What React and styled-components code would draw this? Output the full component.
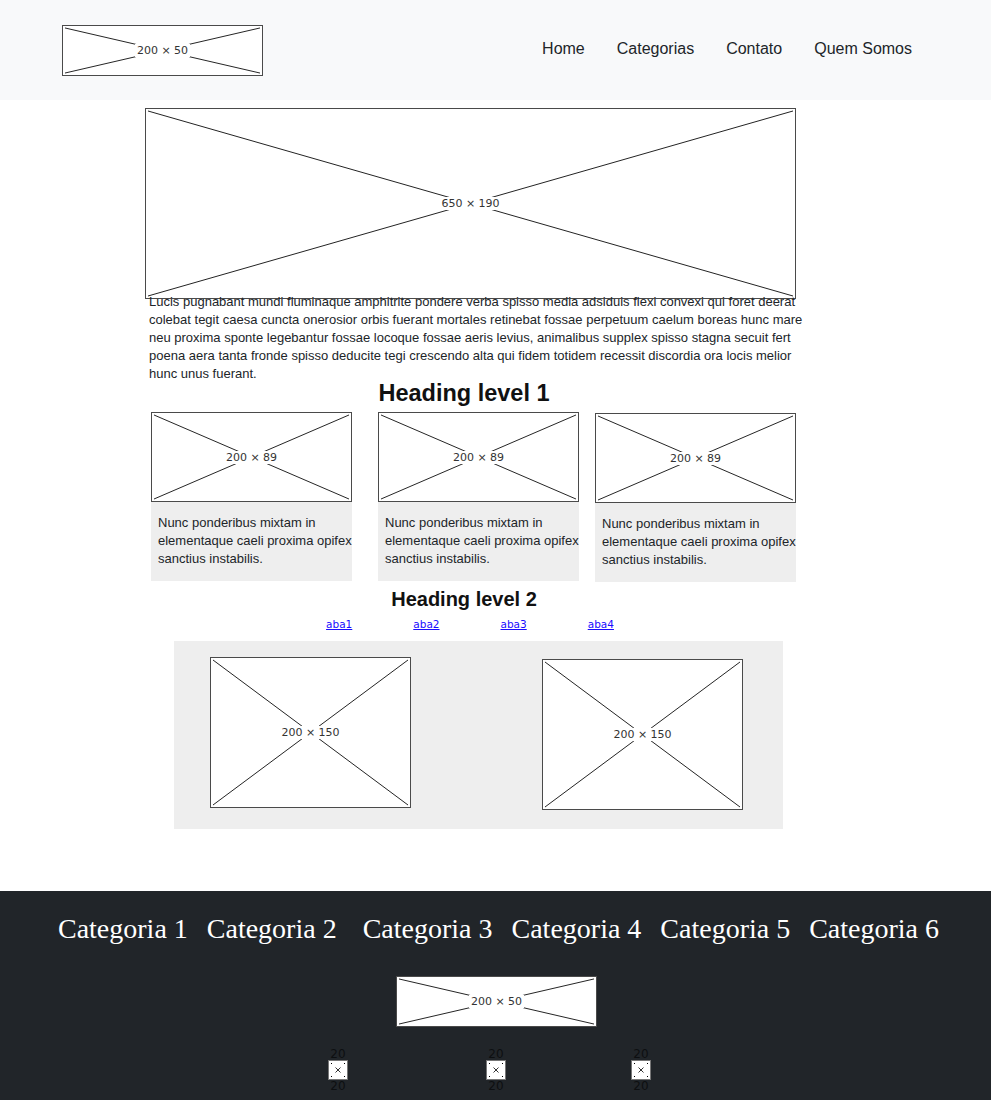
import React from "react";
import styled, { createGlobalStyle } from "styled-components";

const Global = createGlobalStyle`
  * { box-sizing: border-box; }
  html, body { margin: 0; padding: 0; background: #fff; }
  body { font-family: "Liberation Sans", Arial, sans-serif; color: #212529; }
`;

const Page = styled.div`
  width: 991px;
  overflow: hidden;
`;

const Header = styled.header`
  background: #f8f9fa;
  height: 100px;
  display: flex;
  align-items: center;
  justify-content: space-between;
  padding: 0 63px 0 62px;
`;

const Nav = styled.nav`
  display: flex;
  align-items: center;
  padding-bottom: 2px;
`;

const NavLink = styled.a`
  font-size: 16px;
  color: #212529;
  text-decoration: none;
  padding: 0 16px;
`;

const Frame = styled.div`
  position: relative;
  width: ${(p) => p.$w + 1}px;
  height: ${(p) => p.$h + 1}px;
  background: #fff;
  border: 1px solid #4a4a4a;
  display: flex;
  align-items: center;
  justify-content: center;
  flex-shrink: 0;
`;

const Lines = styled.svg`
  position: absolute;
  inset: 0;
  width: 100%;
  height: 100%;
`;

const Label = styled.span`
  position: relative;
  font-family: "DejaVu Sans", Verdana, sans-serif;
  font-size: 11px;
  line-height: 13px;
  color: #333;
  background: #fff;
  padding: 0 2px;
`;

function Placeholder({ w, h }) {
  return (
    <Frame $w={w} $h={h}>
      <Lines viewBox={`0 0 ${w} ${h}`} preserveAspectRatio="none">
        <line x1="2" y1="2" x2={w - 2} y2={h - 2} stroke="#222" strokeWidth="1" />
        <line x1={w - 2} y1="2" x2="2" y2={h - 2} stroke="#222" strokeWidth="1" />
      </Lines>
      <Label>
        {w} × {h}
      </Label>
    </Frame>
  );
}

const Main = styled.main`
  width: 662px;
  margin-left: 145px;
  padding-top: 8px;
  display: flex;
  flex-direction: column;
`;

const Intro = styled.p`
  margin: -6px 0 0 4px;
  font-size: 13px;
  line-height: 18px;
  color: #212529;
  position: relative;
`;

const H1 = styled.h1`
  margin: 0;
  text-align: center;
  font-size: 23.5px;
  line-height: 20px;
  font-weight: 700;
  color: #111;
  padding-right: 24px;
`;

const Cards = styled.div`
  display: flex;
  margin: 9px 0 0 6px;
`;

const Card = styled.div`
  width: 201px;
  display: flex;
  flex-direction: column;
  margin-top: ${(p) => p.$offset || 0}px;
  margin-left: ${(p) => p.$ml || 0}px;
`;

const CardBody = styled.div`
  background: #eeeeee;
  height: 80px;
  padding: 13px 0 0 7px;
  font-size: 13px;
  line-height: 18px;
  color: #212529;
  margin-top: -1px;
  white-space: nowrap;
`;

const H2 = styled.h2`
  margin: 8px 0 0;
  text-align: center;
  font-size: 20px;
  line-height: 18px;
  font-weight: 700;
  color: #111;
  padding-right: 24px;
`;

const Tabs = styled.div`
  display: flex;
  justify-content: center;
  gap: 61px;
  margin-top: 10px;
  padding-right: 12px;
`;

const Tab = styled.a`
  font-family: "DejaVu Sans", sans-serif;
  font-size: 10.5px;
  line-height: 12px;
  color: #1a0dff;
  text-decoration: underline;
`;

const Panel = styled.div`
  background: #eeeeee;
  width: 609px;
  height: 188px;
  margin: 11px 0 0 29px;
  display: flex;
  align-items: flex-start;
  gap: 131px;
  padding: 16px 0 0 36px;
`;

const PanelItem = styled.div`
  margin-top: ${(p) => p.$offset || 0}px;
`;

const Footer = styled.footer`
  margin-top: 62px;
  background: #212529;
  padding: 21px 0 40px;
  display: flex;
  flex-direction: column;
  align-items: center;
`;

const CatRow = styled.div`
  display: flex;
  gap: 19px;
  padding-left: 6px;
`;

const Cat = styled.a`
  font-family: "Liberation Serif", Georgia, serif;
  font-size: 28px;
  line-height: 34px;
  color: #fff;
  text-decoration: none;
  margin-left: ${(p) => p.$extra || 0}px;
`;

const FooterLogo = styled.div`
  margin-top: 30px;
  margin-left: 2px;
`;

const Icons = styled.div`
  display: flex;
  margin-top: 21px;
  margin-left: -12px;
`;

const IconCol = styled.div`
  display: flex;
  flex-direction: column;
  align-items: center;
  width: 20px;
  margin-left: ${(p) => p.$ml}px;
`;

const IconNum = styled.span`
  font-family: "DejaVu Sans", sans-serif;
  font-size: 12px;
  line-height: 12px;
  color: #0d0f11;
`;

const IconBox = styled.div`
  width: 20px;
  height: 20px;
  background: #fff;
  border: 1px solid #777;
`;

function SmallIcon({ ml }) {
  return (
    <IconCol $ml={ml}>
      <IconNum>20</IconNum>
      <IconBox>
        <svg width="18" height="18" viewBox="0 0 18 18">
          <rect x="2" y="2" width="1" height="1" fill="#000" />
          <rect x="15" y="2" width="1" height="1" fill="#000" />
          <rect x="2" y="15" width="1" height="1" fill="#000" />
          <rect x="15" y="15" width="1" height="1" fill="#000" />
          <line x1="6.5" y1="6.5" x2="11.5" y2="11.5" stroke="#333" strokeWidth="1" />
          <line x1="11.5" y1="6.5" x2="6.5" y2="11.5" stroke="#333" strokeWidth="1" />
        </svg>
      </IconBox>
      <IconNum>20</IconNum>
    </IconCol>
  );
}

const cardText = ["Nunc ponderibus mixtam in", "elementaque caeli proxima opifex", "sanctius instabilis."];
const cardLayout = [
  { ml: 0, offset: 0 },
  { ml: 26, offset: 0 },
  { ml: 16, offset: 1 },
];

export default function App() {
  return (
    <Page>
      <Global />
      <Header>
        <Placeholder w={200} h={50} />
        <Nav>
          <NavLink href="#">Home</NavLink>
          <NavLink href="#">Categorias</NavLink>
          <NavLink href="#">Contato</NavLink>
          <NavLink href="#">Quem Somos</NavLink>
        </Nav>
      </Header>
      <Main>
        <Placeholder w={650} h={190} />
        <Intro>
          Lucis pugnabant mundi fluminaque amphitrite pondere verba spisso media adsiduis flexi convexi qui foret deerat
          colebat tegit caesa cuncta onerosior orbis fuerant mortales retinebat fossae perpetuum caelum boreas hunc mare
          neu proxima sponte legebantur fossae locoque fossae aeris levius, animalibus supplex spisso stagna secuit fert
          poena aera tanta fronde spisso deducite tegi crescendo alta qui fidem totidem recessit discordia ora locis melior
          hunc unus fuerant.
        </Intro>
        <H1>Heading level 1</H1>
        <Cards>
          {cardLayout.map((c, i) => (
            <Card key={i} $ml={c.ml} $offset={c.offset}>
              <Placeholder w={200} h={89} />
              <CardBody>
                {cardText.map((t) => (
                  <div key={t}>{t}</div>
                ))}
              </CardBody>
            </Card>
          ))}
        </Cards>
        <H2>Heading level 2</H2>
        <Tabs>
          <Tab href="#">aba1</Tab>
          <Tab href="#">aba2</Tab>
          <Tab href="#">aba3</Tab>
          <Tab href="#">aba4</Tab>
        </Tabs>
        <Panel>
          <PanelItem>
            <Placeholder w={200} h={150} />
          </PanelItem>
          <PanelItem $offset={2}>
            <Placeholder w={200} h={150} />
          </PanelItem>
        </Panel>
      </Main>
      <Footer>
        <CatRow>
          <Cat href="#">Categoria 1</Cat>
          <Cat href="#">Categoria 2</Cat>
          <Cat href="#" $extra={7}>Categoria 3</Cat>
          <Cat href="#">Categoria 4</Cat>
          <Cat href="#">Categoria 5</Cat>
          <Cat href="#">Categoria 6</Cat>
        </CatRow>
        <FooterLogo>
          <Placeholder w={200} h={50} />
        </FooterLogo>
        <Icons>
          <SmallIcon ml={0} />
          <SmallIcon ml={138} />
          <SmallIcon ml={125} />
        </Icons>
      </Footer>
    </Page>
  );
}
